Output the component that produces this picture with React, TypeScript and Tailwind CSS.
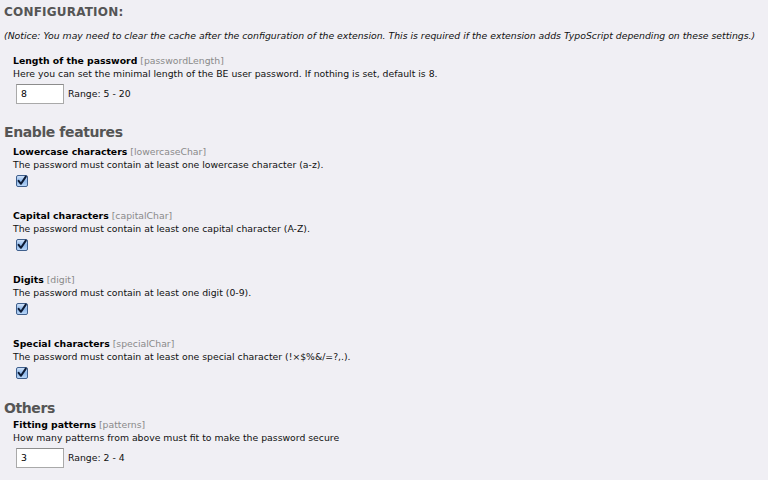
import React from 'react';

const font = { fontFamily: '"DejaVu Sans", Verdana, sans-serif' };

const CheckMark = () => (
  <svg width="12" height="12" viewBox="0 0 12 12" className="block">
    <defs>
      <linearGradient id="cbg" x1="0" y1="0" x2="0" y2="1">
        <stop offset="0" stopColor="#d6e6fa" />
        <stop offset="0.5" stopColor="#8fb8ea" />
        <stop offset="1" stopColor="#bcd8f8" />
      </linearGradient>
    </defs>
    <rect x="0.5" y="0.5" width="11" height="11" rx="1.5" fill="url(#cbg)" stroke="#3f5f8c" />
    <path d="M2.6 5.8 L5 8.8 L9.8 1.6" fill="none" stroke="#0c1a33" strokeWidth="2" strokeLinecap="round" strokeLinejoin="round" />
  </svg>
);

const Label = ({ title, name }: { title: string; name: string }) => (
  <div className="text-[9.3px] leading-[13px]">
    <span className="font-bold text-black">{title}</span>{' '}
    <span className="text-[#8a8a8a]">[{name}]</span>
  </div>
);

const CheckItem = ({ title, name, desc }: { title: string; name: string; desc: string }) => (
  <div className="pl-[13px] h-[64px]">
    <Label title={title} name={name} />
    <div className="text-[9.3px] leading-[13px] text-[#111]">{desc}</div>
    <div className="pl-[3px] pt-[4px]">
      <CheckMark />
    </div>
  </div>
);

const NumberItem = ({ title, name, desc, value, range }: { title: string; name: string; desc: string; value: string; range: string }) => (
  <div className="pl-[13px]">
    <Label title={title} name={name} />
    <div className="text-[9.3px] leading-[13px] text-[#111]">{desc}</div>
    <div className="flex items-center gap-[4px] pl-[3px] pt-[4px]">
      <div className="w-[48px] h-[20px] bg-white border border-[#a9a9a9] border-t-[#8c8c8c] text-[9.3px] leading-[18px] pl-[4px] text-black">
        {value}
      </div>
      <span className="text-[9.3px] text-[#111]">{range}</span>
    </div>
  </div>
);

export default function App() {
  return (
    <div className="w-[768px] h-[480px] overflow-hidden bg-[#f0eff4] text-[#111]" style={font}>
      <div className="pl-[4px] pt-[4px]">
        <h1 className="text-[12px] font-bold text-[#555] leading-[16px] tracking-[0.2px]">CONFIGURATION:</h1>
        <p className="mt-[9px] text-[9.3px] italic leading-[13px] text-[#111] whitespace-nowrap">
          (Notice: You may need to clear the cache after the configuration of the extension. This is required if the extension adds TypoScript depending on these settings.)
        </p>
      </div>

      <div className="mt-[12px]">
        <NumberItem
          title="Length of the password"
          name="passwordLength"
          desc="Here you can set the minimal length of the BE user password. If nothing is set, default is 8."
          value="8"
          range="Range: 5 - 20"
        />
      </div>

      <h2 className="mt-[19px] pl-[4px] text-[14px] font-bold text-[#555] leading-[18px] tracking-[-0.4px]">Enable features</h2>
      <div className="mt-[4px]">
        <CheckItem title="Lowercase characters" name="lowercaseChar" desc="The password must contain at least one lowercase character (a-z)." />
        <CheckItem title="Capital characters" name="capitalChar" desc="The password must contain at least one capital character (A-Z)." />
        <CheckItem title="Digits" name="digit" desc="The password must contain at least one digit (0-9)." />
        <CheckItem title="Special characters" name="specialChar" desc="The password must contain at least one special character (!×$%&/=?,.)." />
      </div>

      <h2 className="mt-[-2px] pl-[4px] text-[14px] font-bold text-[#555] leading-[18px] tracking-[-0.4px]">Others</h2>
      <div className="mt-[1px]">
        <NumberItem
          title="Fitting patterns"
          name="patterns"
          desc="How many patterns from above must fit to make the password secure"
          value="3"
          range="Range: 2 - 4"
        />
      </div>
    </div>
  );
}
